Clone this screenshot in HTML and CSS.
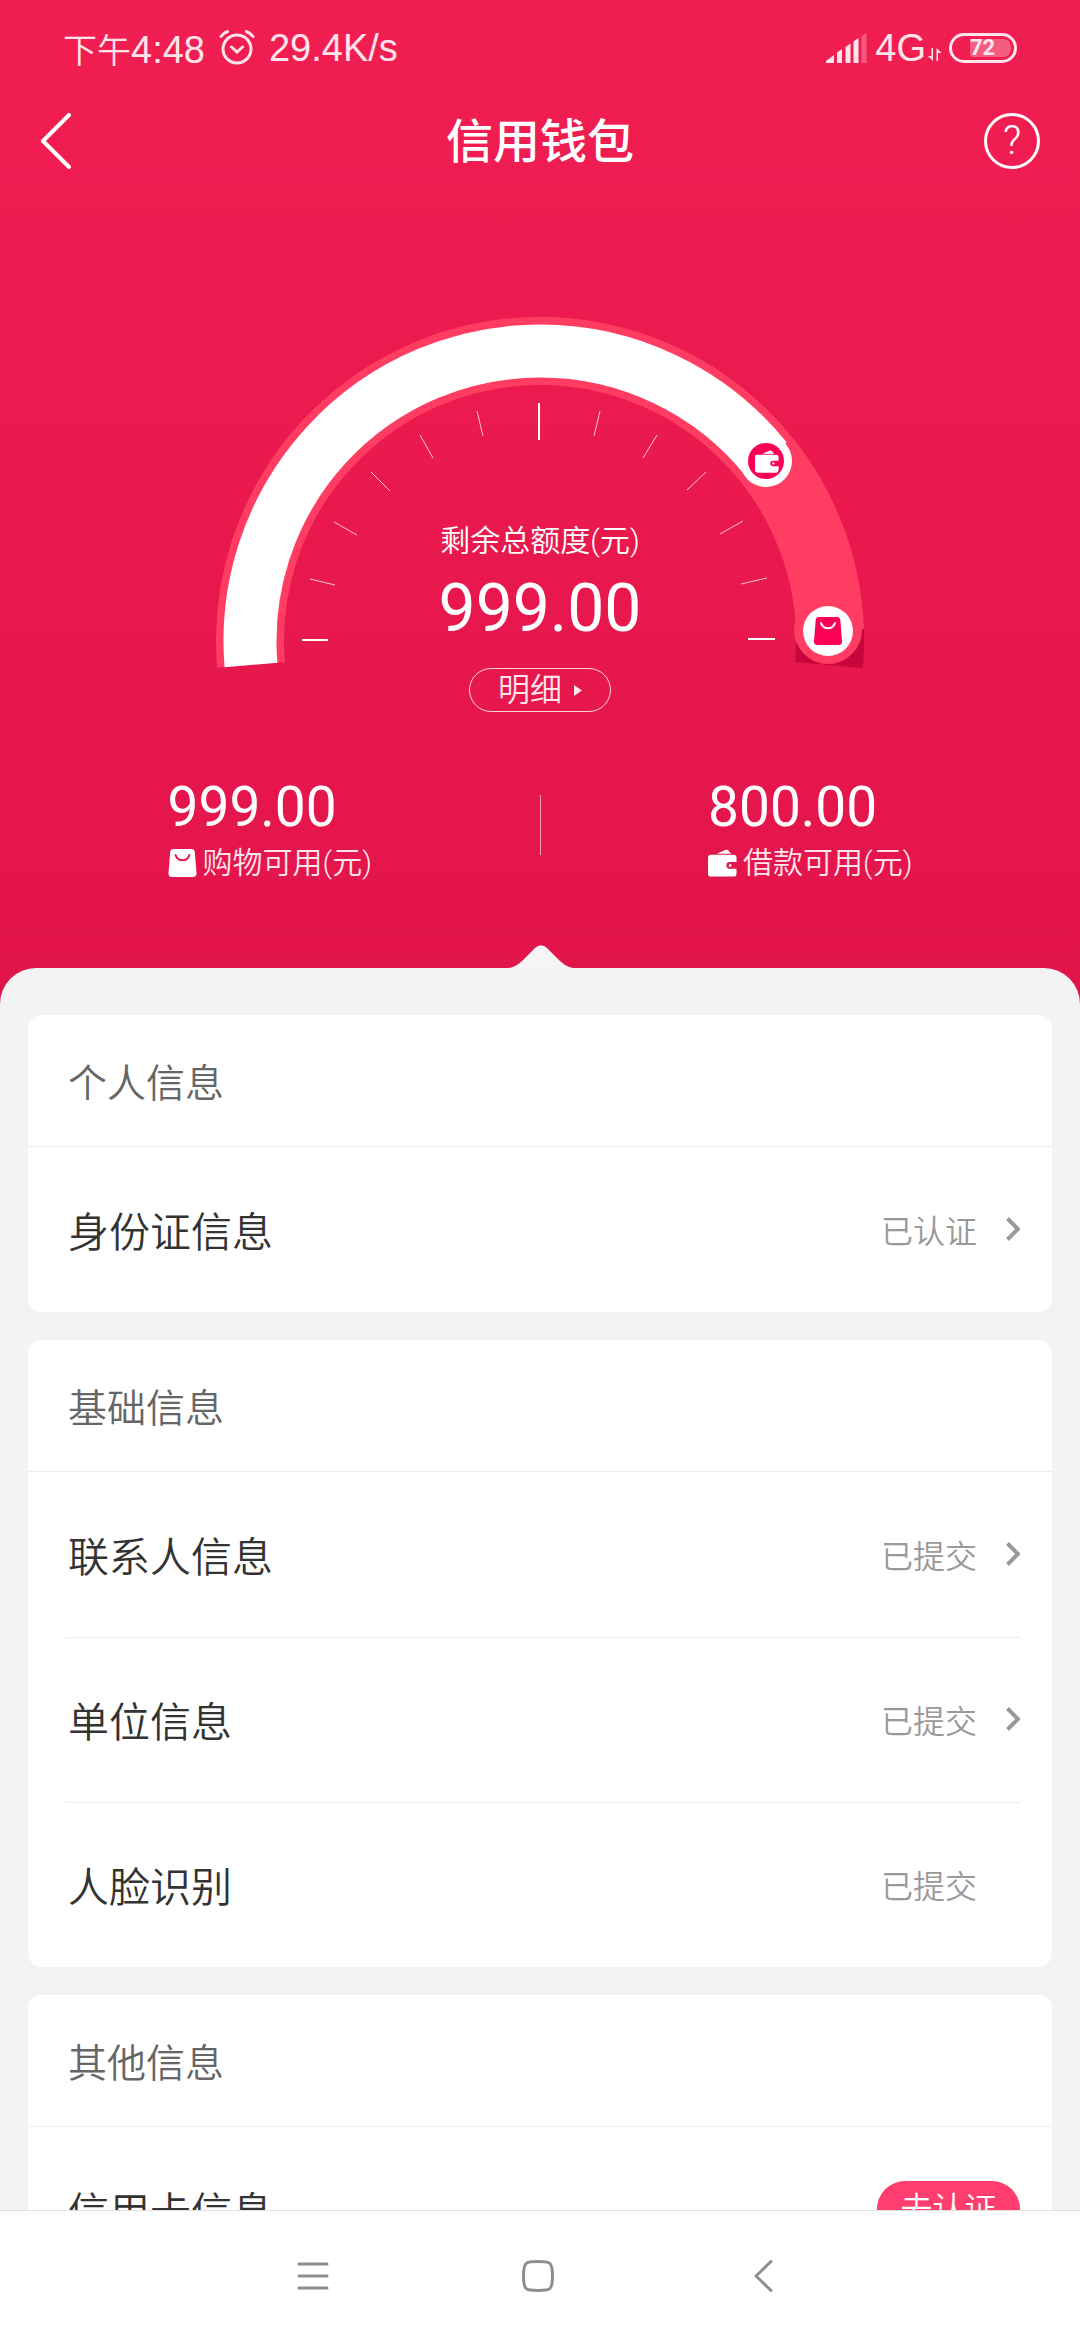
FILE: index.html
```html
<!DOCTYPE html>
<html lang="zh-CN">
<head>
<meta charset="utf-8">
<meta name="viewport" content="width=device-width, initial-scale=1">
<title>信用钱包</title>
<link rel="stylesheet" href="styles.css">
</head>
<body>
<svg class="defs" aria-hidden="true">
  <symbol id="bag" viewBox="0 0 28 28">
    <path fill="currentColor" fill-rule="evenodd" d="M5 0h18q3 0 3.300 3l1.700 21q.2 4-3.500 4H3.500Q-.2 28 0 24L1.700 3Q2 0 5 0zM6.300 5.200q-.3 1.200.4 2.500Q9 12.200 14 12.200t7.300-4.500q.7-1.300.4-2.500-1-.8-1.700.6Q18.200 10.300 14 10.300T8 5.800Q7.300 4.400 6.300 5.200z"/>
  </symbol>
  <symbol id="wallet" viewBox="0 0 30 28">
    <path fill="currentColor" d="M9 4.500 18.500.400Q20.300-.200 21.300 1.200L24 4.500z"/>
    <path fill="currentColor" fill-rule="evenodd" d="M3 5.500h23.500q3 0 3 3v4.500H23q-4 0-4 3.500T23 20h6.500v5q0 3-3 3H3q-3 0-3-3V8.500q0-3 3-3zM23 15a1.500 1.500 0 1 0 .01 0z"/>
  </symbol>
  <symbol id="chevron" viewBox="0 0 14 24">
    <path fill="none" stroke="currentColor" stroke-width="4" d="M1.500 1.500 12 12 1.500 22.500"/>
  </symbol>
</svg>

<div class="app">
  <main class="screen">
    <section class="hero">
      <div class="status-bar">
        <div class="status-group status-left">
          <span class="clock"><span class="clock-period">下午</span>4:48</span>
          <svg class="alarm" viewBox="0 0 36 36" fill="none" stroke="currentColor" stroke-width="3" stroke-linecap="round">
            <circle cx="18" cy="19" r="14"/>
            <path d="M12.500 17l5.500 5 5.500-5M2 6.500Q4.500 3 8.500 1.500M34 6.500Q31.500 3 27.500 1.500"/>
          </svg>
          <span>29.4K/s</span>
        </div>
        <div class="status-group status-right">
          <svg class="signal" viewBox="0 0 41 30" fill="currentColor">
            <path d="M0 30v-2l8-6v8zM11 19.500l5-3.500V30h-5zM19.500 14l5-3.500V30h-5zM27.500 8.500l5-3.500V30h-5z"/>
            <path opacity=".3" d="M35.500 3l5-3v30h-5z"/>
          </svg>
          <span class="network">4G<svg class="traffic" viewBox="0 0 13 13" fill="currentColor"><path d="M3.500 0H5v13L0 8h3.500zM8.500 0l5 5H10v8H8.500z"/></svg></span>
          <span class="battery"><span class="battery-level">72</span></span>
        </div>
      </div>

      <header class="title-bar">
        <button class="icon-button" type="button" aria-label="返回">
          <svg class="back-icon" viewBox="0 0 30 56" fill="none" stroke="currentColor" stroke-width="4" stroke-linecap="round" stroke-linejoin="round"><path d="M28 2 2 28l26 26"/></svg>
        </button>
        <h1 class="title">信用钱包</h1>
        <button class="icon-button help" type="button" aria-label="帮助">?</button>
      </header>

      <div class="gauge">
        <svg class="gauge-dial" viewBox="0 0 648 352" fill="none">
          <path stroke="#c8063e" stroke-width="68" d="M614 313A290 290 0 0 1 613 348"/>
          <path stroke="#ff3d62" stroke-width="68" d="M35 348A290 290 0 0 1 324 34A290 290 0 0 1 614 313"/>
          <circle cx="612" cy="313" r="34" fill="#ff3d62"/>
          <path stroke="#fff" stroke-width="53" d="M35 348A290 290 0 0 1 324 34A290 290 0 0 1 550 142"/>
          <circle cx="550" cy="144" r="26" fill="#fff"/>
          <circle cx="550" cy="144" r="18" fill="#fb0056"/>
          <circle cx="612" cy="314" r="25" fill="#fff"/>
          <g stroke="#fff" stroke-opacity=".75">
            <path d="M94 262l25 6M118 205l23 13M155 155l19 19M204 118l13 23M261 94l6 25M384 94l-6 25M441 118l-14 23M490 155l-19 18M527 204l-23 13M551 261l-26 6"/>
          </g>
          <path stroke="#fff" stroke-width="2" d="M86 323h26M532 322h27M323 86v37"/>
          <use href="#wallet" x="539" y="133" width="24" height="23" color="#fff"/>
          <use href="#bag" x="598" y="300" width="28" height="28" color="#fb0056"/>
        </svg>
        <div class="gauge-text">
          <p class="gauge-label">剩余总额度(元)</p>
          <p class="gauge-value">999.00</p>
          <button class="detail" type="button">明细<svg class="detail-arrow" viewBox="0 0 8 11" fill="currentColor"><path d="M0 0l8 5.500L0 11z"/></svg></button>
        </div>
      </div>

      <div class="limits">
        <div class="limit">
          <p class="limit-value">999.00</p>
          <p class="limit-label"><svg class="limit-icon"><use href="#bag"/></svg>购物可用(元)</p>
        </div>
        <div class="limits-divider"></div>
        <div class="limit">
          <p class="limit-value">800.00</p>
          <p class="limit-label"><svg class="limit-icon"><use href="#wallet"/></svg>借款可用(元)</p>
        </div>
      </div>
    </section>

    <div class="sheet">
      <svg class="notch" viewBox="0 0 80 24" fill="currentColor"><path d="M0 24Q13 24 21 16L34 3Q40-2.500 46 3L59 16Q67 24 80 24z"/></svg>
      <section class="card">
        <h2 class="card-title">个人信息</h2>
        <ul class="rows">
          <li><a class="row" href="#id"><span class="row-name">身份证信息</span><span class="row-state">已认证</span><svg class="row-chevron"><use href="#chevron"/></svg></a></li>
        </ul>
      </section>
      <section class="card">
        <h2 class="card-title">基础信息</h2>
        <ul class="rows">
          <li><a class="row" href="#contacts"><span class="row-name">联系人信息</span><span class="row-state">已提交</span><svg class="row-chevron"><use href="#chevron"/></svg></a></li>
          <li><a class="row" href="#employer"><span class="row-name">单位信息</span><span class="row-state">已提交</span><svg class="row-chevron"><use href="#chevron"/></svg></a></li>
          <li><div class="row"><span class="row-name">人脸识别</span><span class="row-state">已提交</span><span class="row-chevron"></span></div></li>
        </ul>
      </section>
      <section class="card">
        <h2 class="card-title">其他信息</h2>
        <ul class="rows">
          <li><div class="row"><span class="row-name">信用卡信息</span><button class="verify" type="button">去认证</button></div></li>
        </ul>
      </section>
    </div>
  </main>

  <nav class="system-nav">
    <button class="nav-button" type="button" aria-label="菜单">
      <svg class="nav-icon" viewBox="0 0 32 32"><path d="M2 4h28M2 16h28M2 28h28"/></svg>
    </button>
    <button class="nav-button" type="button" aria-label="主页">
      <svg class="nav-icon" viewBox="0 0 32 32"><path d="M16 1.500c12 0 14.500 0 14.500 14.500S28 30.500 16 30.500 1.500 30.500 1.500 16 4 1.500 16 1.500z"/></svg>
    </button>
    <button class="nav-button" type="button" aria-label="返回上一页">
      <svg class="nav-icon" viewBox="0 0 32 32"><path d="M24 1.500 9 16l15 14.500"/></svg>
    </button>
  </nav>
</div>
</body>
</html>
```
FILE: styles.css
```css
* {
  box-sizing: border-box;
}

body,
h1,
h2,
p,
ul {
  margin: 0;
  padding: 0;
}

body {
  font-family: Roboto, "Noto Sans CJK SC", sans-serif;
  font-weight: 350;
  color: #333;
  background: #f3f3f3;
}

button {
  font: inherit;
  color: inherit;
  background: none;
  border: 0;
  padding: 0;
}

a {
  color: inherit;
  text-decoration: none;
}

.defs {
  display: none;
}

.app {
  display: flex;
  flex-direction: column;
  height: 100vh;
}

.screen {
  flex: 1;
  min-height: 0;
  overflow-y: auto;
  scrollbar-width: none;
}

/* Red header area */
.hero {
  color: #fff;
  background: linear-gradient(#f11e51, #e1144b);
  padding-bottom: 128px;
}

.status-bar {
  display: flex;
  justify-content: space-between;
  height: 96px;
  padding: 0 63px;
  font-family: "Liberation Sans", "Noto Sans CJK SC", sans-serif;
  font-size: 38px;
  color: #ffe4ec;
}

.status-group {
  display: flex;
  align-items: center;
}

.status-left {
  gap: 14px;
}

.status-right {
  gap: 8px;
}

.clock-period {
  font-size: 34px;
}

.alarm {
  width: 36px;
  height: 36px;
}

.signal {
  width: 41px;
  height: 30px;
}

.network {
  display: flex;
  align-items: baseline;
  gap: 2px;
}

.traffic {
  width: 13px;
  height: 13px;
}

.battery {
  display: flex;
  justify-content: flex-end;
  width: 68px;
  height: 30px;
  padding: 3px;
  border: 3px solid currentColor;
  border-radius: 15px;
}

.battery-level {
  width: 41px;
  border-radius: 3px 8px 8px 3px;
  background: rgba(255, 255, 255, .28);
  font-family: Roboto, sans-serif;
  font-size: 22px;
  font-weight: 700;
  line-height: 18px;
}

.title-bar {
  display: flex;
  align-items: center;
  justify-content: space-between;
  height: 90px;
  padding: 0 40px;
}

.icon-button {
  width: 56px;
  height: 56px;
  text-align: left;
}

.back-icon {
  display: block;
  width: 32px;
  height: 56px;
}

.title {
  padding-top: 2px;
  font-size: 47px;
  font-weight: 500;
  line-height: 60px;
}

.help {
  border: 3px solid currentColor;
  border-radius: 50%;
  font-size: 40px;
  font-weight: 300;
  line-height: 50px;
  text-align: center;
}

/* Credit gauge */
.gauge {
  display: grid;
  justify-items: center;
  margin-top: 131px;
}

.gauge-dial {
  grid-area: 1 / 1;
  width: 648px;
  max-width: 100%;
}

.gauge-text {
  grid-area: 1 / 1;
  display: flex;
  flex-direction: column;
  align-items: center;
  padding-top: 204px;
}

.gauge-label {
  font-size: 30px;
  line-height: 40px;
}

.gauge-value {
  font-size: 66px;
  font-weight: 400;
  line-height: 96px;
}

.detail {
  display: flex;
  align-items: center;
  justify-content: center;
  gap: 12px;
  width: 142px;
  height: 44px;
  margin-top: 11px;
  border: 1px solid rgba(255, 255, 255, .8);
  border-radius: 22px;
  font-size: 32px;
  line-height: 40px;
  color: #ffe4ec;
}

.detail-arrow {
  width: 8px;
  height: 11px;
}

/* Available limits */
.limits {
  display: grid;
  grid-template-columns: 1fr 1px 1fr;
  justify-items: center;
  align-items: start;
  margin-top: 63px;
}

.limit-value {
  font-size: 55px;
  font-weight: 400;
  line-height: 64px;
}

.limit-label {
  display: flex;
  align-items: center;
  gap: 6px;
  font-size: 30px;
  line-height: 48px;
  color: #ffe4ec;
}

.limit-icon {
  width: 29px;
  height: 28px;
  color: #fff;
}

.limits-divider {
  width: 1px;
  height: 60px;
  margin-top: 20px;
  background: rgba(255, 255, 255, .6);
}

/* Information sheet */
.sheet {
  position: relative;
  display: flex;
  flex-direction: column;
  gap: 28px;
  margin-top: -47px;
  padding: 47px 28px 28px;
  border-radius: 36px 36px 0 0;
  background: #f3f3f3;
}

.notch {
  position: absolute;
  bottom: 100%;
  left: 50%;
  width: 80px;
  height: 24px;
  margin: 0 0 -1px -39px;
  color: #f5f5f5;
}

.card {
  border-radius: 14px;
  background: #fff;
}

.card-title {
  padding: 7px 40px 0;
  border-bottom: 1px solid #ececec;
  font-size: 39px;
  font-weight: 350;
  line-height: 124px;
  color: #666;
}

.rows {
  padding: 0 32px 0 38px;
  list-style: none;
}

.rows li + li {
  border-top: 1px solid #ececec;
}

.row {
  display: flex;
  align-items: center;
  height: 165px;
  padding: 0 0 2px 2px;
}

.rows li + li .row {
  height: 164px;
}

.row-name {
  flex: 1;
  font-size: 41px;
}

.row-state {
  font-size: 32px;
  color: #999;
}

.row-chevron {
  width: 14px;
  height: 24px;
  margin-left: 29px;
  color: #999;
}

.verify {
  width: 143px;
  height: 56px;
  border-radius: 28px;
  background: #ff3d6e;
  color: #fff;
  font-size: 32px;
  line-height: 56px;
}

/* System navigation */
.system-nav {
  display: flex;
  justify-content: center;
  height: 130px;
  padding-right: 4px;
  border-top: 1px solid #e0e0e0;
  background: #fff;
}

.nav-button {
  display: grid;
  place-items: center;
  width: 225px;
}

.nav-icon {
  width: 32px;
  height: 32px;
  fill: none;
  stroke: #8e8e8e;
  stroke-width: 3;
  stroke-linecap: round;
  stroke-linejoin: round;
}
```
